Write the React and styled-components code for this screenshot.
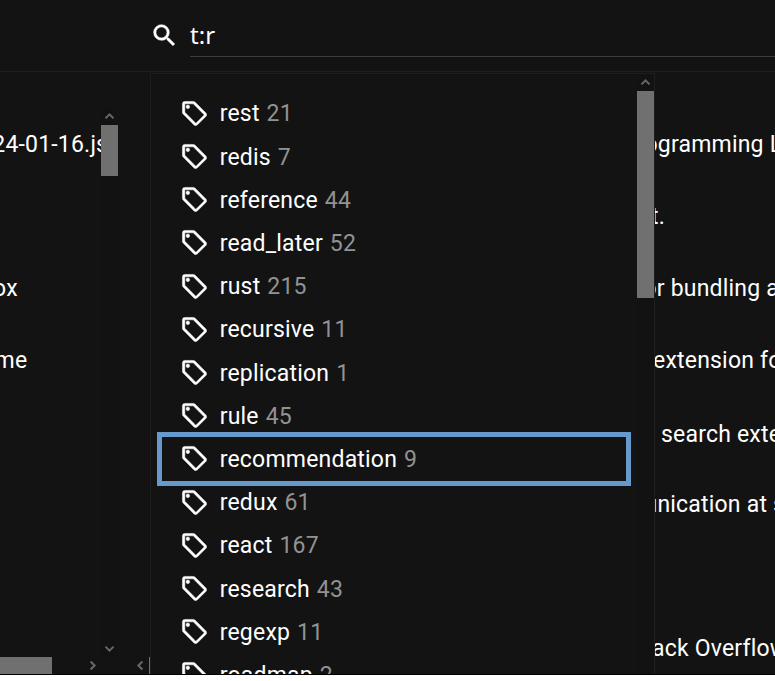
import React from 'react';
import styled, { createGlobalStyle } from 'styled-components';

const Global = createGlobalStyle`
  body { margin: 0; background: #fff; font-family: Roboto, sans-serif; }
  * { box-sizing: border-box; }
`;

const Window = styled.div`
  position: relative;
  display: flex;
  flex-direction: column;
  width: 775px;
  height: 675px;
  overflow: hidden;
  background: #131313;
  border-bottom: 1px solid #000;
  color: #fff;
  font-size: 23px;
  letter-spacing: 0.2px;
  white-space: pre;
`;

const Header = styled.header`
  display: flex;
  flex: none;
  height: 72px;
  padding: 14px 0 0 150px;
  border-bottom: 1px solid #1e1e1e;
`;

const SearchIcon = styled.svg`
  flex: none;
  width: 29px;
  height: 29px;
  margin: 7px 11px 0 0;
  fill: #fff;
  stroke: #fff;
  stroke-width: 0.4;
`;

const Query = styled.div`
  flex: 1;
  height: 43px;
  line-height: 42px;
  font-family: "Noto Sans", sans-serif;
  font-size: 24px;
  letter-spacing: 0.1px;
  border-bottom: 1px solid #3c3c3c;
`;

const Body = styled.div`
  display: flex;
  flex: 1;
  min-height: 0;
`;

const Sidebar = styled.aside`
  display: grid;
  grid-template-columns: 101px 17px;
  grid-template-rows: 549px 17px;
  width: 134px;
  padding-top: 36px;
  flex: none;
`;

const FileList = styled.div`
  overflow: hidden;
  padding-top: 1px;
`;

const FileRow = styled.div`
  height: 72px;
  line-height: 72px;
  margin-left: ${(p) => p.$shift}px;
`;

const VerticalBar = styled.div`
  display: flex;
  flex-direction: column;
  align-items: center;
  width: 17px;
  height: 100%;
  background: #121213;
`;

const HorizontalBar = styled.div`
  display: flex;
  align-items: center;
  justify-content: ${(p) => (p.$packed ? 'flex-start' : 'space-between')};
  height: 17px;
`;

const Thumb = styled.div`
  flex: none;
  width: ${(p) => p.$w}px;
  height: ${(p) => p.$h}px;
  margin-bottom: ${(p) => (p.$push ? 'auto' : 0)};
  background: #707070;
`;

const ArrowIcon = styled.svg`
  flex: none;
  width: 17px;
  height: 17px;
  fill: none;
  stroke: #686868;
  stroke-width: 2;
  transform: rotate(${(p) => p.$turn}deg);
`;

const Content = styled.main`
  display: flex;
  flex-direction: column;
  flex: 1;
  min-width: 0;
  margin-left: -2px;
  padding-top: 36px;
  overflow: hidden;
`;

const Results = styled.div`
  height: 549px;
  padding: 1px 0 0 522px;
`;

const Result = styled.div`
  height: ${(p) => p.$h}px;
  line-height: 72px;
  margin-left: ${(p) => p.$shift}px;
`;

const Popup = styled.div`
  position: absolute;
  left: 150px;
  top: 73px;
  display: flex;
  width: 505px;
  height: 601px;
  border: 1px solid #1e1e1e;
  border-bottom: 0;
  background: #131313;
`;

const Tags = styled.div`
  flex: 1;
  height: 600px;
  padding: 12.85px 6px 0;
  overflow: hidden;
`;

const Tag = styled.div`
  display: flex;
  align-items: center;
  height: 54px;
  margin-bottom: -10.8px;
  padding-left: 18px;
  border: 5px solid ${(p) => (p.$selected ? '#6699cc' : 'transparent')};
`;

const TagSvg = styled.svg`
  flex: none;
  width: 29px;
  height: 29px;
  margin: 0 10.7px 1px 0;
  fill: #fff;
  stroke: #fff;
  stroke-width: 0.4;
`;

const Count = styled.span`
  margin-left: 1px;
  color: #929292;
`;

const tags = [
  ['rest', 21], ['redis', 7], ['reference', 44], ['read_later', 52], ['rust', 215],
  ['recursive', 11], ['replication', 1], ['rule', 45], ['recommendation', 9],
  ['redux', 61], ['react', 167], ['research', 43], ['regexp', 11], ['roadmap', 2],
];

const files = [
  ['2024-01-16.js', -34], ['', 0], ['box', -20], ['name', -31],
];

const results = [
  ['ogramming Language', -9.5, 72],
  ['t.', -3, 72],
  ['or bundling and', -10.5, 72],
  ['extension for', -1, 74],
  ['search extension', 7, 70],
  ['unication at scale', -9.5, 144],
  ['ack Overflow', -2, 72],
];

const Arrow = ({ turn }) => (
  <ArrowIcon viewBox="0 0 17 17" $turn={turn}>
    <path d="M4.5 10.4 8.5 6.4l4 4" />
  </ArrowIcon>
);

export default function App() {
  return (
    <>
      <Global />
      <Window>
        <Header>
          <SearchIcon viewBox="0 0 24 24">
            <path d="M15.5 14h-.79l-.28-.27A6.471 6.471 0 0 0 16 9.5 6.5 6.5 0 1 0 9.5 16c1.61 0 3.09-.59 4.23-1.57l.27.28v.79l5 4.99L20.49 19l-4.99-5zm-6 0C7.01 14 5 11.99 5 9.5S7.01 5 9.5 5 14 7.01 14 9.5 11.99 14 9.5 14z" />
          </SearchIcon>
          <Query>t:r</Query>
        </Header>
        <Body>
          <Sidebar>
            <FileList>
              {files.map(([name, shift], i) => (
                <FileRow key={i} $shift={shift}>{name}</FileRow>
              ))}
            </FileList>
            <VerticalBar>
              <Arrow turn={0} />
              <Thumb $w={17} $h={51} $push />
              <Arrow turn={180} />
            </VerticalBar>
            <HorizontalBar>
              <Thumb $w={52} $h={17} />
              <Arrow turn={90} />
            </HorizontalBar>
          </Sidebar>
          <Content>
            <Results>
              {results.map(([text, shift, h]) => (
                <Result key={text} $shift={shift} $h={h}>{text}</Result>
              ))}
            </Results>
            <HorizontalBar $packed>
              <Arrow turn={-90} />
              <Thumb $w={240} $h={17} />
            </HorizontalBar>
          </Content>
        </Body>
        <Popup>
          <Tags>
            {tags.map(([name, count]) => (
              <Tag key={name} $selected={name === 'recommendation'}>
                <TagSvg viewBox="0 0 24 24">
                  <path d="M21.41 11.58l-9-9A2 2 0 0 0 11 2H4a2 2 0 0 0-2 2v7a2 2 0 0 0 .59 1.42l9 9A2 2 0 0 0 13 22a2 2 0 0 0 1.41-.59l7-7A2 2 0 0 0 22 13a2 2 0 0 0-.59-1.42M13 20l-9-9V4h7l9 9M6.5 5A1.5 1.5 0 1 1 5 6.5 1.5 1.5 0 0 1 6.5 5z" />
                </TagSvg>
                <span>{name} <Count>{count}</Count></span>
              </Tag>
            ))}
          </Tags>
          <VerticalBar>
            <Arrow turn={0} />
            <Thumb $w={17} $h={207} />
          </VerticalBar>
        </Popup>
      </Window>
    </>
  );
}
